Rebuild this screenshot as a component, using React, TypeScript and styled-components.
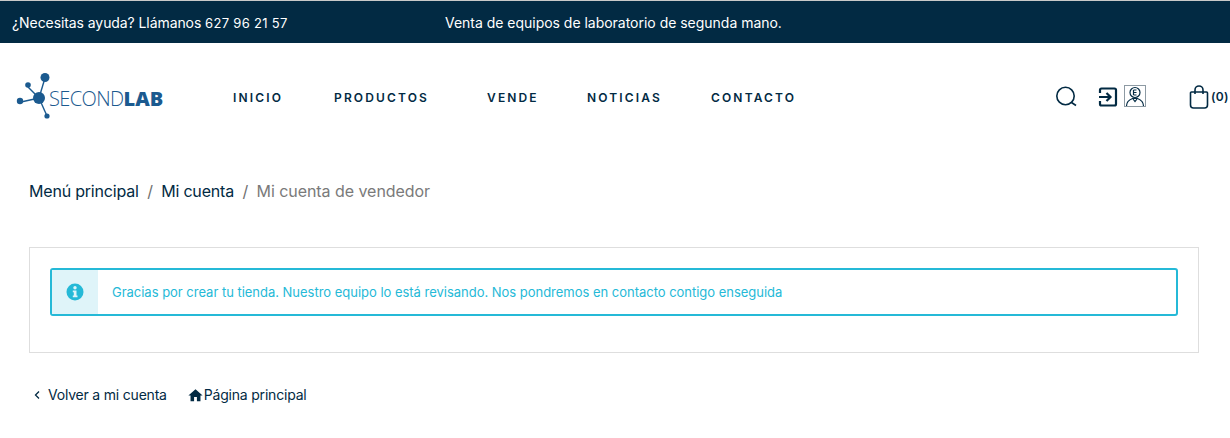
import React from "react";
import styled, { createGlobalStyle } from "styled-components";
import { MdHome } from "react-icons/md";

const navItems = [
  { label: "INICIO", width: 101 },
  { label: "PRODUCTOS", width: 153 },
  { label: "VENDE", width: 100 },
  { label: "NOTICIAS", width: 124 },
  { label: "CONTACTO", width: 100 },
];

export default function App() {
  return (
    <>
      <GlobalStyle />
      <TopBar>
        <Phone>
          ¿Necesitas ayuda? Llámanos <b>627 96 21 57</b>
        </Phone>
        <Promo>Venta de equipos de laboratorio de segunda mano.</Promo>
      </TopBar>
      <Header>
        <Logo>
          <svg width="36" height="48" viewBox="0 0 36 48">
            <g stroke="#1b5a8f" strokeWidth="1.4">
              <line x1="23" y1="25" x2="29" y2="5" />
              <line x1="23" y1="25" x2="12" y2="14" />
              <line x1="23" y1="25" x2="5" y2="29" />
              <line x1="23" y1="25" x2="31" y2="43" />
            </g>
            <g fill="#1b5a8f">
              <circle cx="29" cy="4.5" r="4.5" />
              <circle cx="12" cy="12" r="2.8" />
              <circle cx="23" cy="25" r="6" />
              <circle cx="4" cy="28" r="3.2" />
              <circle cx="31" cy="43" r="2.6" />
            </g>
          </svg>
          <LogoWord>
            SECOND<strong>LAB</strong>
          </LogoWord>
        </Logo>
        <Nav>
          {navItems.map((item) => (
            <NavItem key={item.label} $width={item.width}>
              {item.label}
            </NavItem>
          ))}
        </Nav>
        <Tools>
          <SearchIcon width="24" height="24" viewBox="0 0 24 24">
            <circle cx="10.500" cy="11" r="8.700" />
            <line x1="16.500" y1="17.500" x2="21" y2="20.500" />
          </SearchIcon>
          <LoginIcon width="20" height="20" viewBox="0 0 20 20">
            <path d="M2 6V3a1.5 1.5 0 0 1 1.5-1.5h13A1.5 1.5 0 0 1 18 3v14a1.5 1.5 0 0 1-1.5 1.5h-13A1.5 1.5 0 0 1 2 17v-3" />
            <path d="M1 10h11M8.500 6l4 4-4 4" />
          </LoginIcon>
          <Avatar>
            <svg width="20" height="20" viewBox="0 0 20 20">
              <circle cx="10" cy="6.500" r="5" />
              <path d="M1.500 20c0-5 3.500-6.500 6-7.500h5c2.500 1 6 2.500 6 7.500" />
              <path d="M8.500 4h3M8.500 6.500h3M8.500 9h3M8.500 4v5M8 13l2 2.500 2-2.500" />
            </svg>
          </Avatar>
          <Cart>
            <svg width="20" height="24" viewBox="0 0 20 24">
              <path d="M2.500 7h15a1 1 0 0 1 1 1v12a3 3 0 0 1-3 3h-11a3 3 0 0 1-3-3V8a1 1 0 0 1 1-1z" />
              <path d="M6 9V5a4 4 0 0 1 8 0v4" />
            </svg>
            <CartCount>(0)</CartCount>
          </Cart>
        </Tools>
      </Header>
      <Main>
        <Breadcrumb>
          <li>Menú principal</li>
          <Sep>/</Sep>
          <li>Mi cuenta</li>
          <Sep>/</Sep>
          <Current>Mi cuenta de vendedor</Current>
        </Breadcrumb>
        <Panel>
          <Alert>
            <AlertIcon>
              <svg width="18" height="18" viewBox="0 0 18 18">
                <circle cx="9" cy="9" r="8.500" fill="#25b9d7" />
                <circle cx="9" cy="4.800" r="1.700" fill="#dff4f9" />
                <path d="M6.800 7.500h3.700v5h1v1.800H6.800v-1.800h1v-3.200h-1z" fill="#dff4f9" />
              </svg>
            </AlertIcon>
            <AlertText>
              Gracias por crear tu tienda. Nuestro equipo lo está revisando. Nos
              pondremos en contacto contigo enseguida
            </AlertText>
          </Alert>
        </Panel>
        <Links>
          <FooterLink $gap={7}>
            <svg width="8" height="10" viewBox="0 0 8 10">
              <path d="M6 1.500 2.500 5 6 8.500" fill="none" stroke="#022a43" strokeWidth="1.300" />
            </svg>
            Volver a mi cuenta
          </FooterLink>
          <FooterLink $gap={0}>
            <MdHome size={17} />
            Página principal
          </FooterLink>
        </Links>
      </Main>
    </>
  );
}

const GlobalStyle = createGlobalStyle`
  body {
    margin: 0;
    background: #fff;
    font-family: "Inter", "Liberation Sans", sans-serif;
    color: #022a43;
    overflow: hidden;
  }
`;

const TopBar = styled.div`
  height: 42px;
  border-top: 1px solid #c9c9c9;
  background: #022a43;
  color: #fff;
  display: flex;
  align-items: center;
  padding-left: 12px;
  font-size: 14px;
  letter-spacing: -0.08px;
`;

const Phone = styled.div`
  width: 433px;
  b {
    font-weight: 400;
    font-size: 13px;
    letter-spacing: 0.3px;
  }
`;

const Promo = styled.div`
  letter-spacing: -0.02px;
`;

const Header = styled.header`
  height: 108px;
  display: flex;
  align-items: center;
  padding-left: 16px;
`;

const Logo = styled.div`
  width: 217px;
  display: flex;
  align-items: center;
  margin-top: -1px;
`;

const LogoWord = styled.div`
  font-family: "Open Sans", sans-serif;
  font-size: 20px;
  font-weight: 300;
  color: #1b5a8f;
  margin-left: -3px;
  margin-top: 3px;
  letter-spacing: -0.6px;
  strong {
    font-weight: 800;
    letter-spacing: 0;
  }
`;

const Nav = styled.nav`
  display: flex;
  width: 820px;
`;

const NavItem = styled.div<{ $width: number }>`
  width: ${(p) => p.$width}px;
  font-size: 12px;
  font-weight: 600;
  letter-spacing: 2.150px;
`;

const Tools = styled.div`
  display: flex;
  align-items: center;
  svg {
    fill: none;
    stroke: #022a43;
  }
`;

const SearchIcon = styled.svg`
  stroke-width: 1.600;
  margin-left: 2px;
`;

const LoginIcon = styled.svg`
  stroke-width: 2.200;
  margin-left: 19px;
`;

const Avatar = styled.div`
  width: 20px;
  height: 20px;
  margin-left: 6px;
  margin-top: -3px;
  border: 1px solid #8d9aa3;
  overflow: hidden;
  line-height: 0;
  svg {
    stroke-width: 1.200;
  }
`;

const Cart = styled.div`
  display: flex;
  align-items: center;
  margin-left: 43px;
  svg {
    stroke-width: 1.600;
  }
`;

const CartCount = styled.span`
  font-size: 12px;
  font-weight: 600;
  margin-left: 2px;
  margin-top: -2px;
  letter-spacing: 0.3px;
`;

const Main = styled.main`
  padding: 0 31px 0 29px;
`;

const Breadcrumb = styled.ol`
  list-style: none;
  margin: 30px 0 0;
  padding: 0;
  display: flex;
  font-size: 16px;
  line-height: 20px;
  letter-spacing: -0.2px;
`;

const Sep = styled.li`
  color: #6f6f6f;
  margin: 0 8.500px;
`;

const Current = styled.li`
  color: #7a7a7a;
  letter-spacing: -0.05px;
`;

const Panel = styled.section`
  margin-top: 46px;
  height: 106px;
  box-sizing: border-box;
  border: 1px solid #dedede;
  padding: 20px;
`;

const Alert = styled.div`
  height: 48px;
  box-sizing: border-box;
  border: 2px solid #25b9d7;
  border-radius: 3px;
  display: flex;
  align-items: center;
  color: #25b9d7;
`;

const AlertIcon = styled.div`
  width: 46px;
  height: 100%;
  background: #dff4f9;
  display: flex;
  align-items: center;
  justify-content: center;
`;

const AlertText = styled.div`
  margin-left: 14px;
  font-size: 13px;
  letter-spacing: -0.02px;
`;

const Links = styled.div`
  margin-top: 33px;
  display: flex;
  gap: 20px;
  padding-left: 4px;
`;

const FooterLink = styled.a<{ $gap: number }>`
  display: flex;
  align-items: center;
  gap: ${(p) => p.$gap}px;
  font-size: 14px;
  line-height: 18px;
  letter-spacing: -0.2px;
  color: #022a43;
`;
